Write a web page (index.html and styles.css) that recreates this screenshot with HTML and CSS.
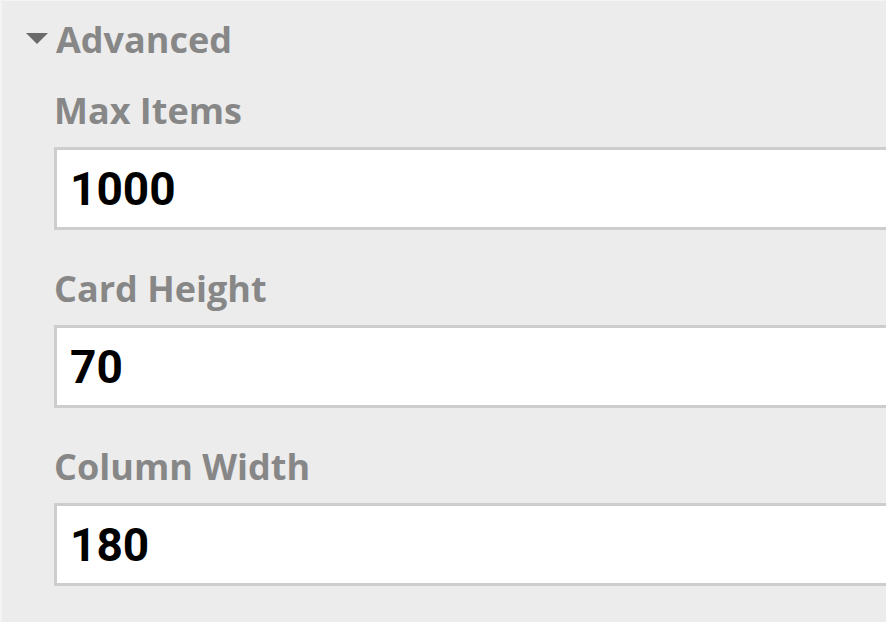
FILE: index.html
```html
<!DOCTYPE html>
<html>
<head>
<meta charset="utf-8">
<link rel="stylesheet" href="styles.css">
</head>
<body>
<div class="panel">
  <div class="section-header">
    <svg class="caret" width="22" height="11" viewBox="0 0 22 11"><path d="M0 0 H22 L11 11 Z" fill="#6a6a6a"/></svg>
    <span class="section-title">Advanced</span>
  </div>
  <div class="fields">
    <div class="field">
      <div class="label">Max Items</div>
      <div class="input">1000</div>
    </div>
    <div class="field">
      <div class="label">Card Height</div>
      <div class="input">70</div>
    </div>
    <div class="field">
      <div class="label">Column Width</div>
      <div class="input">180</div>
    </div>
  </div>
</div>
</body>
</html>
```

FILE: styles.css
```css
html, body {
  margin: 0;
  padding: 0;
  background: #ececec;
  overflow: hidden;
}
.panel {
  height: 622px;
  box-sizing: border-box;
  background: #ececec;
  border-top: 1px solid #f4f4f4;
  border-left: 2px solid #f3f3f3;
  padding-top: 17px;
}
.section-header {
  display: flex;
  align-items: center;
  height: 44px;
}
.caret {
  margin-left: 24px;
  margin-right: 8px;
  margin-top: -4px;
}
.section-title, .label {
  font-family: "Open Sans", "Noto Sans", sans-serif;
  font-weight: 700;
  font-size: 36px;
  line-height: 44px;
  color: #878787;
}
.fields {
  padding-left: 52px;
  margin-top: 27px;
}
.field {
  margin-bottom: 37px;
}
.label {
  margin-bottom: 14px;
}
.input {
  box-sizing: border-box;
  height: 83px;
  width: calc(100% + 20px);
  background: #ffffff;
  border: 3px solid #cdcdcd;
  padding-left: 13px;
  display: flex;
  align-items: center;
  font-family: Roboto, "Liberation Sans", Arial, sans-serif;
  font-weight: 700;
  font-size: 46px;
  color: #000000;
}
```
